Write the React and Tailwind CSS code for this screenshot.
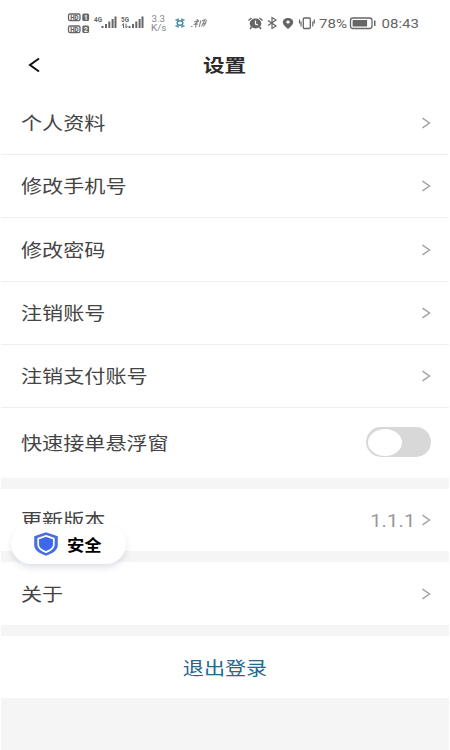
const cjk = "font-['Noto_Sans_CJK_SC',sans-serif]";

function Label({ children, className = "mb-[2px] origin-left text-[#444]" }) {
  return (
    <span className={`inline-block scale-x-[1.172] whitespace-nowrap text-[18px] leading-6 ${className}`}>
      {children}
    </span>
  );
}

function Chevron() {
  return (
    <svg width="10" height="12" viewBox="0 0 10 12" fill="none" stroke="#a0a0a0" strokeWidth="1.4">
      <path d="M1.500 1.200 8.500 6 1.500 10.800" />
    </svg>
  );
}

function Row({ label, value, className }) {
  return (
    <div className={`flex items-center justify-between bg-white pl-5 pr-[18px] ${className}`}>
      <Label>{label}</Label>
      <div className="flex items-center gap-[6px]">
        {value && (
          <span className="mt-px inline-block origin-right scale-x-[1.12] font-[Roboto,sans-serif] text-[18px] leading-6 tracking-[0.1px] text-[#999]">
            {value}
          </span>
        )}
        <Chevron />
      </div>
    </div>
  );
}

function StatusBar() {
  return (
    <svg width="448" height="44" viewBox="1 0 448 44" className="block font-[Roboto,sans-serif]" fill="#666">
      {/* HD badges */}
      {[14, 26].map((y, i) => (
        <g key={y}>
          <rect x="68.5" y={y} width="11.5" height="6.6" rx="1.6" fill="none" stroke="#666" strokeWidth="1.3" />
          <text x="70.2" y={y + 5.6} fontSize="6.5" fontWeight="900" textLength="8.4" lengthAdjust="spacingAndGlyphs">HD</text>
          <rect x="82.3" y={y - 0.5} width="6.8" height="7.6" rx="1.6" />
          <text x="84" y={y + 5.7} fontSize="6.5" fontWeight="700" fill="#fff">{i + 1}</text>
        </g>
      ))}
      {/* Cellular signals */}
      <text x="94" y="22" fontSize="7" fontWeight="700" textLength="8" lengthAdjust="spacingAndGlyphs">4G</text>
      <path d="M101.500 26h2v2h-2zM105 24h2v4h-2zM108.300 21.500h2v6.500h-2zM111.600 19h2v9h-2zM114.500 16.500h2v11.500h-2z" />
      <text x="121" y="22" fontSize="7" fontWeight="700" textLength="8" lengthAdjust="spacingAndGlyphs">5G</text>
      <path d="M122 25.500l1.500-2v4.500M126 23.500v4.500l1.500-2" fill="none" stroke="#666" />
      <path d="M128.500 26h2v2h-2zM132 24h2v4h-2zM135.300 21.500h2v6.500h-2zM138.600 19h2v9h-2zM141.500 16.500h2v11.500h-2z" />
      {/* Network speed */}
      <text x="151.500" y="22" fontSize="9.500" fill="#888" textLength="13.500" lengthAdjust="spacingAndGlyphs">3.3</text>
      <text x="151" y="31" fontSize="9" fill="#888" textLength="15.500" lengthAdjust="spacingAndGlyphs">K/s</text>
      {/* Notification glyphs */}
      <g fill="none" stroke="#4a8da3" strokeWidth="1.500">
        <ellipse cx="180" cy="23" rx="2.800" ry="2.300" />
        <path d="M175.500 20h2.500v-1.500M184.500 20h-2.500v-1.500M175.500 26h2.500v1.500M184.500 26h-2.500v1.500" />
      </g>
      <g fill="none" stroke="#8a8a8a" strokeWidth="1.100">
        <path d="M191 26.500h1.500M194 22l5-1.500-4.500 4 3.500-.5M197.500 19l-2 8.500M201 20.500l-2 6.500M202 21l3-1.500-3.500 7M202.500 24.500l3.500-2-2.500 4M206.500 20l-1.500 4" />
      </g>
      {/* Alarm */}
      <ellipse cx="255.500" cy="23.500" rx="5.800" ry="5" />
      <path d="M248.500 20.500l3-2.500M262.500 20.500l-3-2.500M251.500 27l-1.500 2M259.500 27l1.500 2" stroke="#666" strokeWidth="1.500" />
      <path d="M255.500 20.500v3.500l2.500 1" stroke="#fff" strokeWidth="1.200" fill="none" />
      {/* Bluetooth */}
      <path d="M268 20.500l8 5.500-4 2.500V17.500l4 2.500-8 5.500" fill="none" stroke="#666" strokeWidth="1.200" />
      {/* Location */}
      <path d="M288 29c-3-2.500-5.200-4.500-5.200-6.800 0-2.500 2.300-4.200 5.200-4.200s5.200 1.700 5.200 4.200c0 2.300-2.200 4.300-5.200 6.800z" />
      <ellipse cx="288" cy="22" rx="1.700" ry="1.500" fill="#fff" />
      {/* Vibrate */}
      <rect x="303.300" y="18" width="7" height="10.500" rx="1" fill="none" stroke="#666" strokeWidth="1.300" />
      <path d="M299.500 19.500v4M301 21.500v5M314.300 19.500v4M312.800 21.500v5" stroke="#666" strokeWidth="1.200" />
      <text x="319" y="28" fontSize="13" textLength="28" lengthAdjust="spacingAndGlyphs">78%</text>
      {/* Battery */}
      <rect x="350.500" y="18" width="21.500" height="10.500" rx="2.500" fill="none" stroke="#666" strokeWidth="1.300" />
      <rect x="352.600" y="20" width="14.500" height="6.500" rx="0.500" />
      <path d="M374 20.500h1.500v5.500H374z" />
      <text x="381.500" y="28" fontSize="13" textLength="37.500" lengthAdjust="spacingAndGlyphs">08:43</text>
    </svg>
  );
}

export default function App() {
  return (
    <div className={`relative h-[750px] w-[450px] overflow-hidden border-x border-white bg-[#f5f5f5] ${cjk}`}>
      <div className="bg-white">
        <StatusBar />
        <header className="grid h-[47px] grid-cols-[1fr_auto_1fr] items-center pb-[5px]">
          <svg className="ml-[27px]" width="13" height="16" viewBox="0 0 13 16" fill="none" stroke="#111" strokeWidth="2">
            <path d="M11 1.500 2 8l9 6.500" />
          </svg>
          <h1 className="mb-[2px] scale-x-[1.167] text-[18.500px] font-bold leading-6 text-[#2c2c2c]">设置</h1>
        </header>
      </div>
      <main>
        <Row label="个人资料" className="h-[64px] border-b border-[#eee]" />
        <Row label="修改手机号" className="h-[63px] border-b border-[#eee]" />
        <Row label="修改密码" className="h-[64px] border-b border-[#eee]" />
        <Row label="注销账号" className="h-[63px] border-b border-[#eee]" />
        <Row label="注销支付账号" className="h-[63px] border-b border-[#eee]" />
        <div className="flex h-[70px] items-center justify-between bg-white pl-5 pr-[18px]">
          <Label>快速接单悬浮窗</Label>
          <div className="mb-[2px] flex h-[30px] w-[65px] items-center rounded-full bg-[#d8d8d8] pl-[1.5px]">
            <div className="h-[27px] w-[34px] rounded-[50%] bg-white" />
          </div>
        </div>
        <Row label="更新版本" value="1.1.1" className="mt-[11px] h-[62px]" />
        <Row label="关于" className="mt-[11px] h-[63px]" />
        <div className="mt-[11px] flex h-[62px] items-center justify-center bg-white">
          <Label className="mb-px origin-center text-[#24688c]">退出登录</Label>
        </div>
      </main>
      <div className="absolute left-[10px] top-[524px] flex h-[40px] w-[115px] items-center rounded-full bg-white pl-[22px] shadow-[0_4px_7px_-1px_rgba(80,90,130,0.2)]">
        <div className="absolute left-[8px] top-0 h-[14px] w-[90px] bg-white" />
        <svg className="relative" width="26" height="24" viewBox="0 0 26 24">
          <path d="M13 .3 24.800 4.300V13c0 5-5 8.500-11.800 10.700C6.200 21.500 1.200 18 1.200 13V4.300z" fill="#4a6fdc" />
          <path d="M13 3.900 20.800 6.600v6.200c0 3.300-3.200 5.600-7.800 7.300-4.600-1.700-7.800-4-7.800-7.300V6.600z" fill="#3d68ec" stroke="#fff" strokeWidth="1.700" />
        </svg>
        <span className="relative ml-[8px] origin-left scale-x-[1.080] text-[16px] font-bold leading-6 text-black">安全</span>
      </div>
    </div>
  );
}
